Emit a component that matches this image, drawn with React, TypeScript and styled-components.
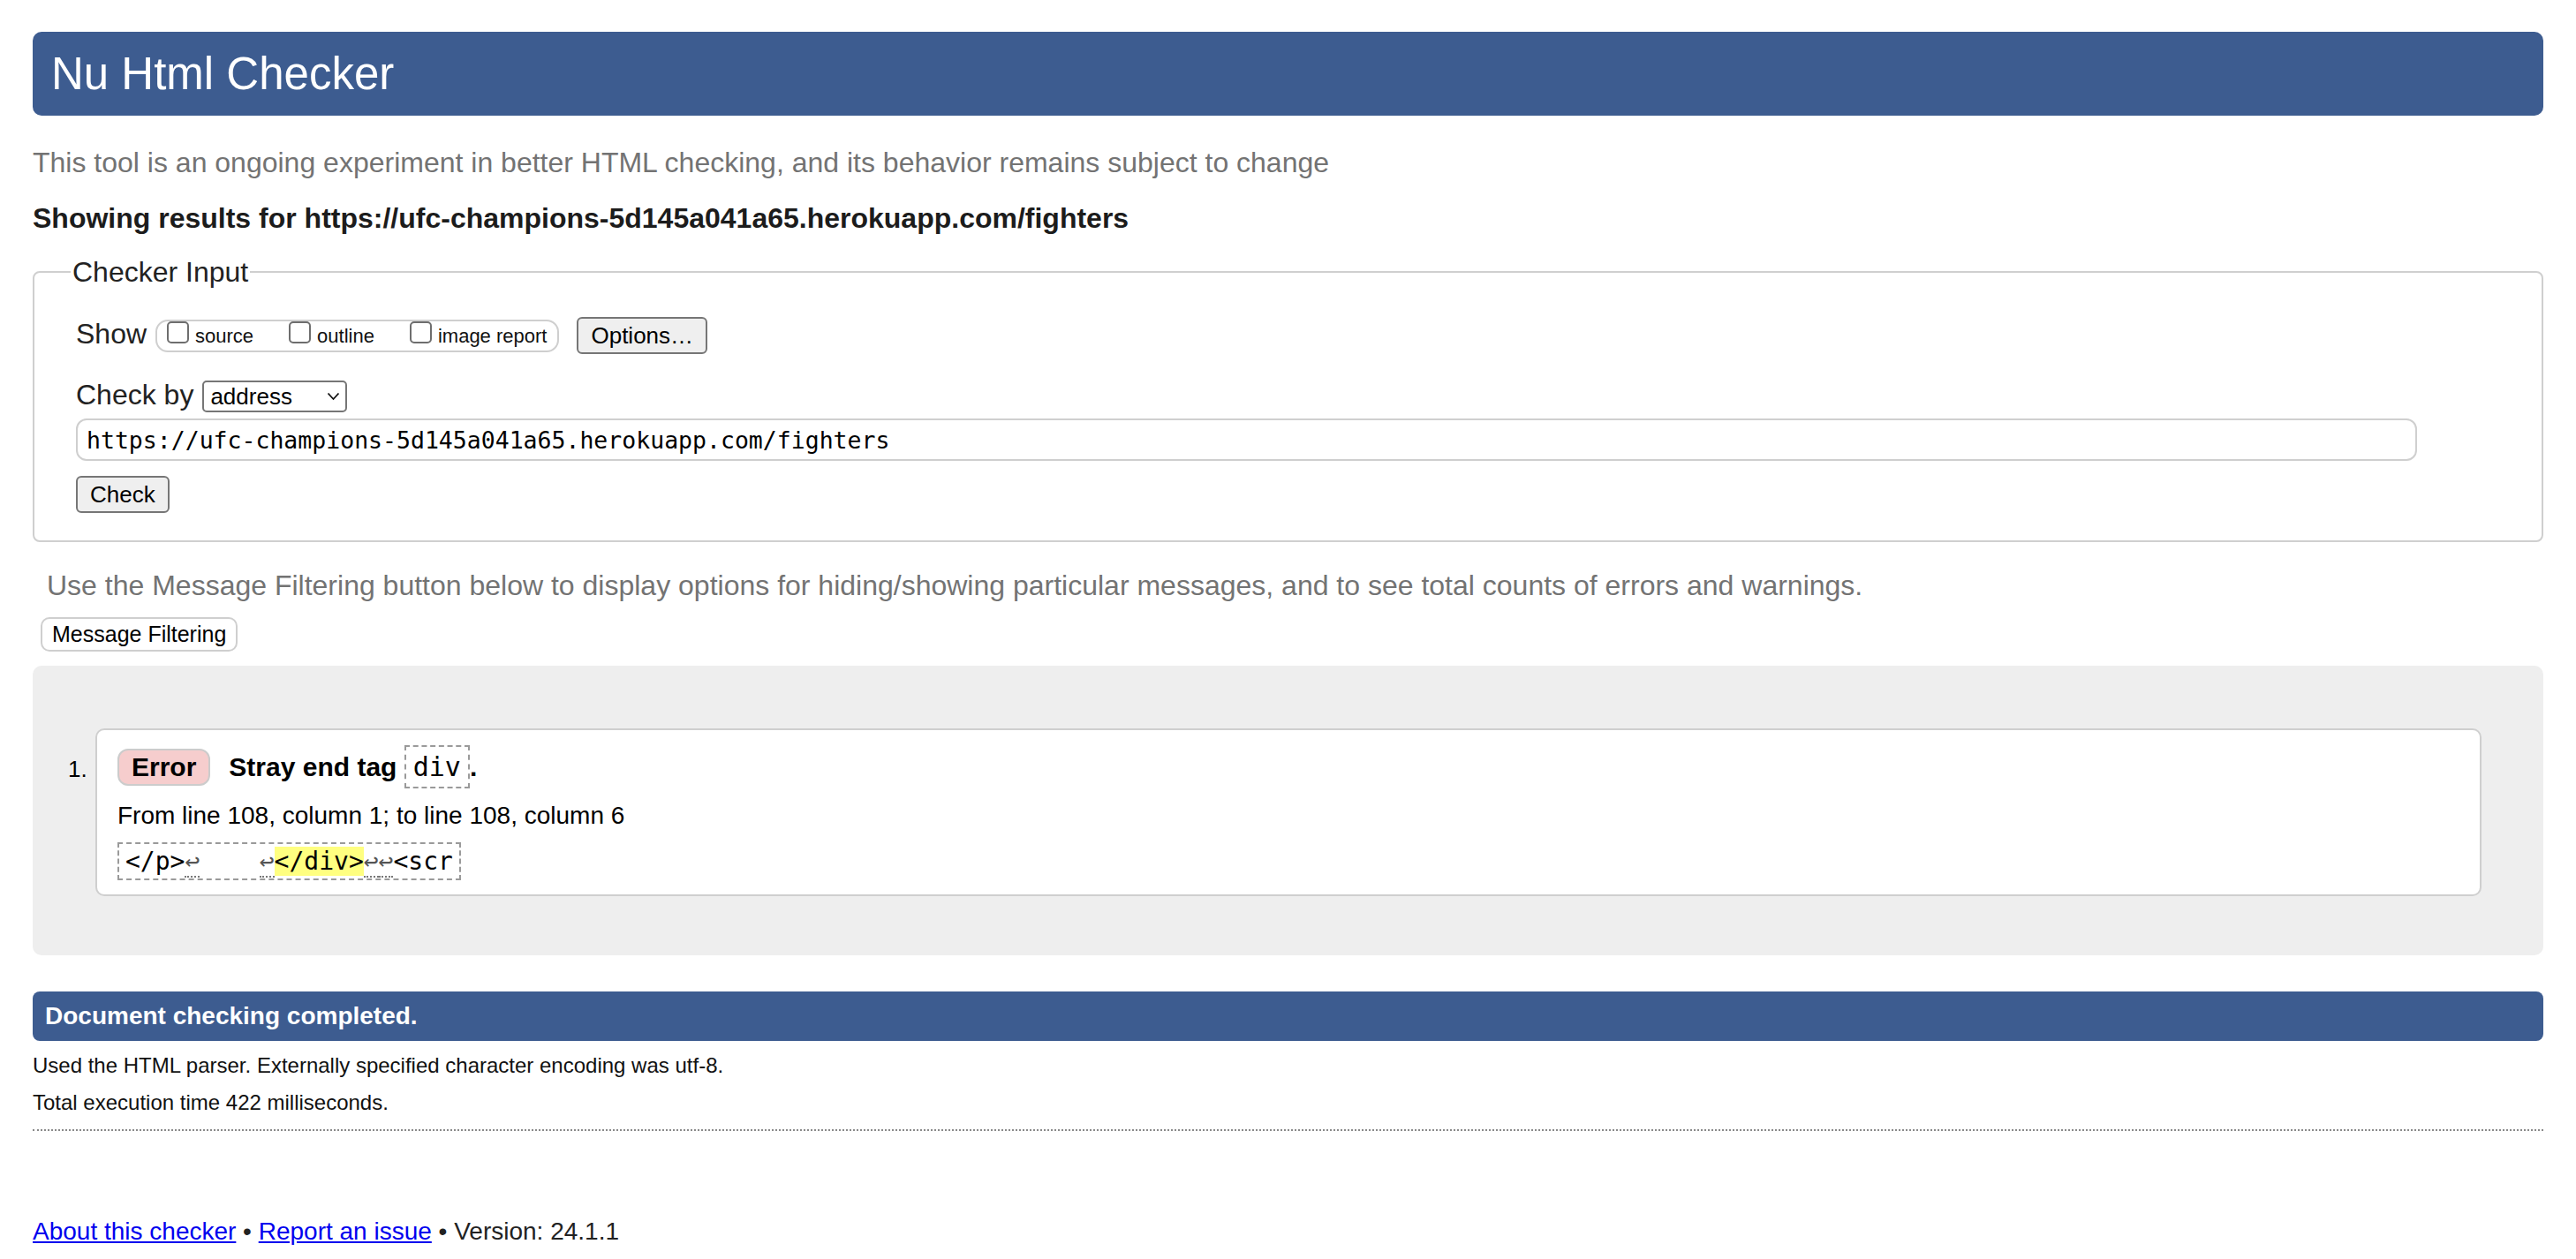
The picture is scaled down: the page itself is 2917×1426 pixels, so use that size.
import React from 'react'
import styled, { createGlobalStyle } from 'styled-components'

const GlobalStyle = createGlobalStyle`
  html, body {
    margin: 0;
    padding: 0;
    background: #fff;
  }
  body {
    font-family: "Liberation Sans", Arial, Helvetica, sans-serif;
    color: #000;
  }
`

const mono = `"DejaVu Sans Mono", "Liberation Mono", monospace`

const Page = styled.div`
    padding: 36px 37px 24px;
`

const Banner = styled.h1`
    margin: 0;
    height: 95px;
    display: flex;
    align-items: center;
    padding-left: 21px;
    background: #3d5c90;
    color: #fff;
    font-size: 51px;
    font-weight: normal;
    border-radius: 10px;
`

const Intro = styled.p`
    margin: 34px 0 0;
    font-size: 32px;
    line-height: 38px;
    color: #737373;
`

const ResultsFor = styled.p`
    margin: 25px 0 0;
    font-size: 32px;
    line-height: 38px;
    font-weight: bold;
    color: #1c1c1c;
`

const InputSet = styled.fieldset`
    margin: 23px 0 0;
    padding: 32px 47px 31px;
    border: 2px solid #cfcfcf;
    border-radius: 8px;
    min-inline-size: 0;
`

const Legend = styled.legend`
    padding: 0 2px;
    margin-left: -6px;
    font-size: 32px;
    line-height: 38px;
    color: #222;
`

const FormRow = styled.div<{ $top?: number }>`
    display: flex;
    align-items: center;
    height: 42px;
    margin-top: ${p => p.$top ?? 0}px;
`

const RowLabel = styled.span`
    align-self: flex-start;
    font-size: 32px;
    line-height: 38px;
    margin-right: 10px;
    color: #222;
`

const ToggleGroup = styled.div`
    display: flex;
    align-items: flex-start;
    gap: 40px;
    height: 37px;
    box-sizing: border-box;
    padding: 0 12px 0 11px;
    border: 2px solid #cfcfcf;
    border-radius: 14px;
`

const Toggle = styled.label`
    display: flex;
    align-items: flex-start;
    gap: 7px;
`

const Tick = styled.input`
    appearance: none;
    margin: 0;
    width: 25px;
    height: 25px;
    box-sizing: border-box;
    border: 2px solid #6e6e6e;
    border-radius: 5px;
    background: #fff;
`

const ToggleText = styled.span`
    font-size: 22px;
    line-height: 33px;
    color: #111;
`

const Button = styled.button<{ $left?: number; $top?: number }>`
    display: block;
    height: 42px;
    padding: 0 14px;
    margin: ${p => p.$top ?? 0}px 0 0 ${p => p.$left ?? 0}px;
    font-family: inherit;
    font-size: 26px;
    color: #000;
    background: #efefef;
    border: 2px solid #767676;
    border-radius: 6px;
`

const SelectWrap = styled.span`
    position: relative;
    display: inline-block;
    height: 36px;
    svg {
        position: absolute;
        right: 8px;
        top: 13px;
        pointer-events: none;
    }
`

const Select = styled.select`
    appearance: none;
    width: 164px;
    height: 36px;
    box-sizing: border-box;
    padding: 0 0 0 7px;
    font-family: inherit;
    font-size: 26px;
    color: #000;
    background: #fff;
    border: 2px solid #767676;
    border-radius: 5px;
`

const UrlField = styled.input`
    display: block;
    margin-top: 4px;
    width: calc(100% - 94px);
    height: 48px;
    box-sizing: border-box;
    padding: 0 10px;
    font-family: ${mono};
    font-size: 26.5px;
    color: #000;
    border: 2px solid #cfcfcf;
    border-radius: 12px;
`

const Hint = styled.p`
    margin: 30px 0 0 16px;
    font-size: 32px;
    line-height: 38px;
    color: #737373;
`

const FilterButton = styled.button`
    display: block;
    margin: 17px 0 0 9px;
    height: 39px;
    padding: 0 11px;
    font-family: inherit;
    font-size: 25px;
    color: #000;
    background: #fff;
    border: 2px solid #cfcfcf;
    border-radius: 10px;
`

const ResultsPanel = styled.div`
    margin-top: 16px;
    padding: 71px 70px 67px 40px;
    background: #eeeeee;
    border-radius: 10px;
`

const MessageList = styled.ol`
    list-style: none;
    margin: 0;
    padding: 0;
`

const MessageItem = styled.li`
    display: flex;
    align-items: flex-start;
`

const Marker = styled.span`
    width: 31px;
    flex-shrink: 0;
    margin-top: 30px;
    font-size: 26px;
    line-height: 32px;
`

const Card = styled.div`
    flex: 1;
    padding: 17px 23px 16px;
    background: #fff;
    border: 2px solid #cfcfcf;
    border-radius: 10px;
`

const Heading = styled.div`
    display: flex;
    align-items: center;
`

const Badge = styled.span`
    display: flex;
    align-items: center;
    height: 42px;
    box-sizing: border-box;
    padding: 0 14px;
    font-size: 30px;
    font-weight: bold;
    background: #f6cdcd;
    border: 2px solid #cccccc;
    border-radius: 12px;
`

const Title = styled.span`
    margin-left: 21px;
    font-size: 30px;
    font-weight: bold;
`

const Code = styled.code`
    display: inline-block;
    padding: 5px 8px;
    font-family: ${mono};
    font-size: 30px;
    font-weight: normal;
    border: 2px dashed #9a9a9a;
`

const Location = styled.p`
    margin: 14px 0 0;
    font-size: 28px;
    line-height: 34px;
`

const Extract = styled.code`
    display: inline-block;
    margin-top: 13px;
    padding: 3px 7px;
    font-family: ${mono};
    font-size: 28px;
    line-height: 33px;
    white-space: pre;
    border: 2px dashed #9a9a9a;
`

const Lf = styled.b`
    font-weight: normal;
    color: #555;
    border-bottom: 2px dotted #777;
`

const Mark = styled.mark`
    background: #ffff80;
    color: #000;
`

const DoneBar = styled.h2`
    margin: 41px 0 0;
    height: 56px;
    display: flex;
    align-items: center;
    padding: 0 14px;
    background: #3d5c90;
    color: #fff;
    font-size: 28px;
    font-weight: bold;
    border-radius: 8px;
`

const Stat = styled.p<{ $top: number }>`
    margin: ${p => p.$top}px 0 0;
    font-size: 24px;
    line-height: 30px;
    color: #111;
`

const Footer = styled.footer`
    margin-top: 15px;
    padding-top: 97px;
    border-top: 2px dotted #8a8a8a;
    font-size: 28px;
    line-height: 34px;
    color: #222;
    a {
        color: #0000ee;
        text-decoration: underline;
    }
`

function CheckerInput() {
    return (
        <InputSet>
            <Legend>Checker Input</Legend>
            <FormRow>
                <RowLabel>Show</RowLabel>
                <ToggleGroup>
                    <Toggle><Tick type="checkbox" /><ToggleText>source</ToggleText></Toggle>
                    <Toggle><Tick type="checkbox" /><ToggleText>outline</ToggleText></Toggle>
                    <Toggle><Tick type="checkbox" /><ToggleText>image report</ToggleText></Toggle>
                </ToggleGroup>
                <Button $left={20} type="button">Options…</Button>
            </FormRow>
            <FormRow $top={27}>
                <RowLabel>Check by</RowLabel>
                <SelectWrap>
                    <Select defaultValue="address">
                        <option value="address">address</option>
                        <option value="file">file upload</option>
                        <option value="textarea">text input</option>
                    </Select>
                    <svg width="15" height="10" viewBox="0 0 15 10">
                        <polyline points="1.5,1.5 7.5,8 13.5,1.5" fill="none" stroke="#111" strokeWidth="1.8" />
                    </svg>
                </SelectWrap>
            </FormRow>
            <UrlField readOnly value="https://ufc-champions-5d145a041a65.herokuapp.com/fighters" />
            <Button $top={17} type="button">Check</Button>
        </InputSet>
    )
}

function Results() {
    return (
        <ResultsPanel>
            <MessageList>
                <MessageItem>
                    <Marker>1.</Marker>
                    <Card>
                        <Heading>
                            <Badge>Error</Badge>
                            <Title>Stray end tag <Code>div</Code>.</Title>
                        </Heading>
                        <Location>From line 108, column 1; to line 108, column 6</Location>
                        <Extract>{'</p>'}<Lf>↩</Lf>{'    '}<Lf>↩</Lf><Mark>{'</div>'}</Mark><Lf>↩</Lf><Lf>↩</Lf>{'<scr'}</Extract>
                    </Card>
                </MessageItem>
            </MessageList>
        </ResultsPanel>
    )
}

export default function App() {
    return (
        <Page>
            <GlobalStyle />
            <Banner>Nu Html Checker</Banner>
            <Intro>This tool is an ongoing experiment in better HTML checking, and its behavior remains subject to change</Intro>
            <ResultsFor>Showing results for https://ufc-champions-5d145a041a65.herokuapp.com/fighters</ResultsFor>
            <CheckerInput />
            <Hint>Use the Message Filtering button below to display options for hiding/showing particular messages, and to see total counts of errors and warnings.</Hint>
            <FilterButton type="button">Message Filtering</FilterButton>
            <Results />
            <DoneBar>Document checking completed.</DoneBar>
            <Stat $top={13}>Used the HTML parser. Externally specified character encoding was utf-8.</Stat>
            <Stat $top={12}>Total execution time 422 milliseconds.</Stat>
            <Footer>
                <a href="#">About this checker</a> • <a href="#">Report an issue</a> • Version: 24.1.1
            </Footer>
        </Page>
    )
}
